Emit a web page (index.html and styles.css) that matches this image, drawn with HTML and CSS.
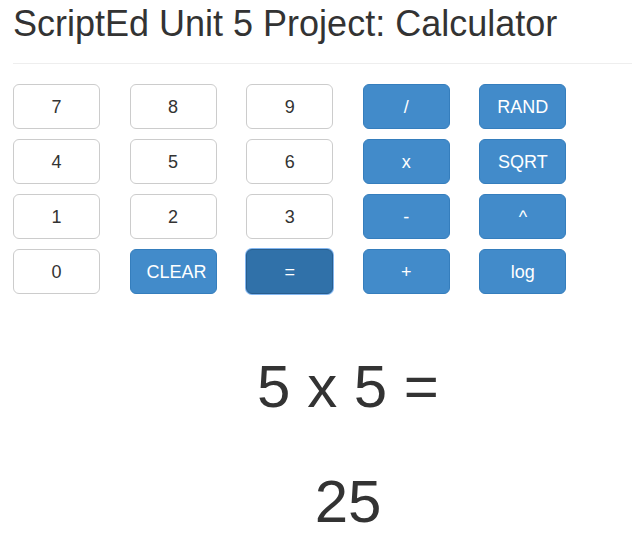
FILE: index.html
```html
<!DOCTYPE html>
<html>
<head>
<meta charset="utf-8">
<title>Calculator</title>
<link rel="stylesheet" href="styles.css">
</head>
<body>
<div class="page">
  <div class="container">
    <div class="page-header">
      <h1 class="title">ScriptEd Unit 5 Project: Calculator</h1>
    </div>
    <div class="keypad">
      <button class="btn btn-default">7</button>
      <button class="btn btn-default">8</button>
      <button class="btn btn-default">9</button>
      <button class="btn btn-primary">/</button>
      <button class="btn btn-primary">RAND</button>
      <button class="btn btn-default">4</button>
      <button class="btn btn-default">5</button>
      <button class="btn btn-default">6</button>
      <button class="btn btn-primary">x</button>
      <button class="btn btn-primary">SQRT</button>
      <button class="btn btn-default">1</button>
      <button class="btn btn-default">2</button>
      <button class="btn btn-default">3</button>
      <button class="btn btn-primary">-</button>
      <button class="btn btn-primary">^</button>
      <button class="btn btn-default">0</button>
      <button class="btn btn-primary">CLEAR</button>
      <button class="btn btn-primary btn-active">=</button>
      <button class="btn btn-primary">+</button>
      <button class="btn btn-primary">log</button>
    </div>
    <div class="display">
      <div class="expression">5 x 5 =</div>
      <div class="result">25</div>
    </div>
  </div>
</div>
</body>
</html>
```
FILE: styles.css
```css
html, body {
  margin: 0;
  padding: 0;
  background: #fff;
}
.page {
  overflow: hidden;
  width: 632px;
  font-family: "Liberation Sans", Arial, sans-serif;
  color: #333;
}
.container {
  width: 670px;
  padding-left: 13px;
}
.page-header {
  padding-bottom: 9px;
  border-bottom: 1px solid #eee;
  margin-bottom: 20px;
}
.title {
  margin: 4px 0 10px 0;
  font-size: 36px;
  font-weight: 500;
  line-height: 39.6px;
}
.keypad {
  display: grid;
  grid-template-columns: repeat(5, 87px);
  column-gap: 29.6px;
  row-gap: 10px;
}
.btn {
  box-sizing: border-box;
  width: 87px;
  height: 45px;
  padding: 11px 16px 9px;
  font-family: "Liberation Sans", Arial, sans-serif;
  font-size: 18px;
  line-height: 23px;
  border-radius: 6px;
  border: 1px solid transparent;
  white-space: nowrap;
  text-align: center;
  overflow: visible;
}
.btn-default {
  background: #fff;
  border-color: #ccc;
  color: #333;
}
.btn-primary {
  background: #428bca;
  border-color: #357ebd;
  color: #fff;
}
.btn-active {
  background: #3071a9;
  border-color: #285e8e;
  box-shadow: 0 0 0 1px #82b6f0;
}
.display {
  margin-top: 60px;
  text-align: center;
  font-size: 60px;
  line-height: 66px;
}
.expression {
  margin-bottom: 49px;
}
```
